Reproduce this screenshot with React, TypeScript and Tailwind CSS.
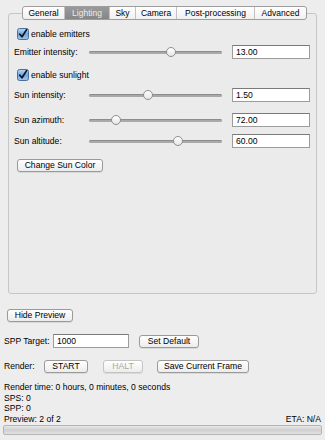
import React from 'react';

const font = { fontFamily: '"Liberation Sans", Arial, sans-serif' };

function CheckBox() {
  return (
    <svg width="12" height="12" viewBox="0 0 12 12" className="shrink-0">
      <defs>
        <linearGradient id="cbg" x1="0" y1="0" x2="0" y2="1">
          <stop offset="0" stopColor="#b9d8f6" />
          <stop offset="0.5" stopColor="#6fa6e3" />
          <stop offset="1" stopColor="#9cc8f2" />
        </linearGradient>
      </defs>
      <rect x="0.5" y="0.5" width="11" height="11" rx="2" fill="url(#cbg)" stroke="#4c6f9a" />
      <path d="M2.8 6.2 L5 8.8 L9.6 1.6" fill="none" stroke="#111" strokeWidth="1.7" strokeLinecap="round" strokeLinejoin="round" />
    </svg>
  );
}

function Slider({ pct }: { pct: number }) {
  return (
    <div className="relative w-[133px] h-[12px] flex items-center">
      <div className="w-full h-[3px] rounded-full bg-[#a9a9a9] border-t border-[#8c8c8c]" />
      <div
        className="absolute top-[1px] w-[10px] h-[10px] rounded-full bg-gradient-to-b from-white to-[#e6e6e6] border border-[#8f8f8f]"
        style={{ left: `calc(${pct}% - 5px)` }}
      />
    </div>
  );
}

function Field({ value, w }: { value: string; w: string }) {
  return (
    <div className={`${w} h-[14px] bg-white border border-[#9c9c9c] border-t-[#7a7a7a] pl-[3px] flex items-center text-[8.6px] text-black leading-none`}>
      {value}
    </div>
  );
}

function Btn({ label, w, disabled }: { label: string; w: string; disabled?: boolean }) {
  return (
    <div
      className={`${w} h-[13px] rounded-[3px] border ${disabled ? 'border-[#c4c4c4] text-[#a8a8a8]' : 'border-[#9a9a9a] text-black'} bg-gradient-to-b from-white to-[#ececec] flex items-center justify-center text-[8.6px] leading-none shadow-[0_1px_0_rgba(0,0,0,0.08)]`}
    >
      {label}
    </div>
  );
}

function SliderRow({ label, pct, value, mt }: { label: string; pct: number; value: string; mt: string }) {
  return (
    <div className={`${mt} flex items-center h-[14px]`}>
      <div className="w-[75px] text-[8.6px] leading-none text-black">{label}</div>
      <Slider pct={pct} />
      <div className="ml-[10px]">
        <Field value={value} w="w-[78px]" />
      </div>
    </div>
  );
}

const tabs = [
  { name: 'General', w: 'w-[41px]' },
  { name: 'Lighting', w: 'w-[45px]', active: true },
  { name: 'Sky', w: 'w-[26px]' },
  { name: 'Camera', w: 'w-[41px]' },
  { name: 'Post-processing', w: 'w-[78px]' },
  { name: 'Advanced', w: 'w-[52px]' },
];

export default function App() {
  return (
    <div className="w-[325px] h-[440px] bg-[#ededed] overflow-hidden text-black" style={font}>
      {/* Tabbed panel */}
      <div className="pt-[6px] px-[8px]">
        <div className="relative z-10 flex ml-[14px] h-[14px] rounded-[3px] border border-[#9d9d9d] overflow-hidden bg-gradient-to-b from-white to-[#f0f0f0] w-fit">
          {tabs.map((t, i) => (
            <div
              key={t.name}
              className={`${t.w} h-full flex items-center justify-center text-[8.5px] leading-none ${i > 0 ? 'border-l border-[#c2c2c2]' : ''} ${t.active ? 'bg-gradient-to-b from-[#9a9a9a] to-[#868686] text-[#ececec]' : 'text-black'}`}
            >
              {t.name}
            </div>
          ))}
        </div>
        <div className="-mt-[7px] h-[281px] rounded-[3px] border border-[#c6c6c6] bg-[#ebebeb] pt-[14px] pl-[5px]">
          <div className="flex items-center gap-[2px] h-[12px] pl-[3px]">
            <CheckBox />
            <span className="text-[8.6px] leading-none">enable emitters</span>
          </div>
          <SliderRow label="Emitter intensity:" pct={62} value="13.00" mt="mt-[5px]" />
          <div className="mt-[10px] flex items-center gap-[2px] h-[12px] pl-[3px]">
            <CheckBox />
            <span className="text-[8.6px] leading-none">enable sunlight</span>
          </div>
          <SliderRow label="Sun intensity:" pct={44} value="1.50" mt="mt-[7px]" />
          <SliderRow label="Sun azimuth:" pct={20} value="72.00" mt="mt-[11px]" />
          <SliderRow label="Sun altitude:" pct={67} value="60.00" mt="mt-[7px]" />
          <div className="mt-[11px] pl-[3px]">
            <Btn label="Change Sun Color" w="w-[86px]" />
          </div>
        </div>
      </div>

      {/* Controls */}
      <div className="mt-[15px] pl-[7px]">
        <Btn label="Hide Preview" w="w-[66px]" />
      </div>
      <div className="mt-[12px] flex items-center pl-[4px] h-[14px]">
        <span className="w-[49px] text-[8.6px] leading-none">SPP Target:</span>
        <Field value="1000" w="w-[76px]" />
        <div className="ml-[10px]">
          <Btn label="Set Default" w="w-[60px]" />
        </div>
      </div>
      <div className="mt-[12px] flex items-center pl-[4px] h-[13px]">
        <span className="w-[40px] text-[8.6px] leading-none">Render:</span>
        <Btn label="START" w="w-[44px]" />
        <div className="ml-[15px]">
          <Btn label="HALT" w="w-[40px]" disabled />
        </div>
        <div className="ml-[14px]">
          <Btn label="Save Current Frame" w="w-[92px]" />
        </div>
      </div>
      <div className="mt-[9px] pl-[4px] text-[8.6px] leading-[10.7px]">
        <div>Render time: 0 hours, 0 minutes, 0 seconds</div>
        <div>SPS: 0</div>
        <div>SPP: 0</div>
      </div>
      <div className="flex justify-between px-[4px] text-[8.6px] leading-[10.7px]">
        <span>Preview: 2 of 2</span>
        <span>ETA: N/A</span>
      </div>
      <div className="mx-[3px] h-[10px] rounded-[2px] border border-[#b5b5b5] bg-gradient-to-b from-[#e8e8e8] via-[#cfcfcf] to-[#e2e2e2]" />
    </div>
  );
}
